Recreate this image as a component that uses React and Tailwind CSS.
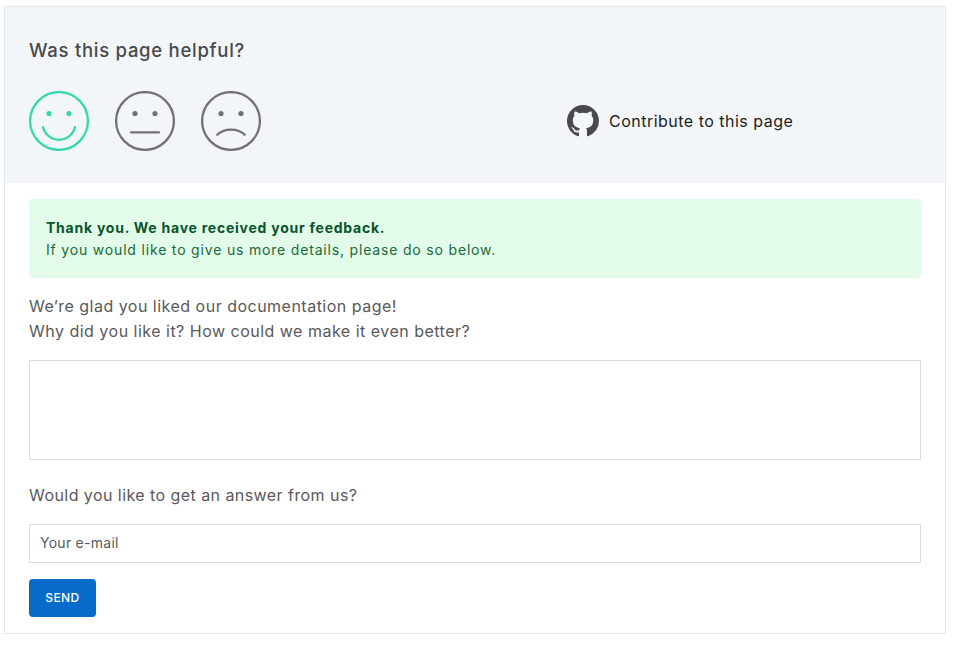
const faces = [
  { name: "Happy", color: "text-[#35d8ae]", mouth: "M14 36A16.4 16.4 0 0 0 46 36" },
  { name: "Neutral", color: "text-[#707276]", mouth: "M16 41.3H44" },
  { name: "Sad", color: "text-[#707276]", mouth: "M16.2 43.8C23 36.8 37 36.8 43.8 43.8" },
];

function Face({ name, color, mouth }) {
  return (
    <button aria-label={name} className={`size-[60px] ${color}`}>
      <svg viewBox="0 0 60 60" fill="none" stroke="currentColor" strokeWidth="2.3" strokeLinecap="round" className="size-full">
        <circle cx="30" cy="30" r="28.9" />
        <circle cx="20" cy="22.5" r="2.6" fill="currentColor" stroke="none" />
        <circle cx="40" cy="22.5" r="2.6" fill="currentColor" stroke="none" />
        <path d={mouth} />
      </svg>
    </button>
  );
}

function GithubMark() {
  return (
    <svg viewBox="0 0 16 16" fill="currentColor" className="size-8 text-[#48494b]">
      <path d="M8 0C3.58 0 0 3.58 0 8c0 3.54 2.29 6.53 5.47 7.59.4.07.55-.17.55-.38 0-.19-.01-.82-.01-1.49-2.01.37-2.53-.49-2.69-.94-.09-.23-.48-.94-.82-1.13-.28-.15-.68-.52-.01-.53.63-.01 1.08.58 1.23.82.72 1.21 1.87.87 2.33.66.07-.52.28-.87.51-1.07-1.78-.2-3.64-.89-3.64-3.95 0-.87.31-1.59.82-2.15-.08-.2-.36-1.02.08-2.12 0 0 .67-.21 2.2.82.64-.18 1.32-.27 2-.27s1.36.09 2 .27c1.53-1.04 2.2-.82 2.2-.82.44 1.1.16 1.92.08 2.12.51.56.82 1.27.82 2.15 0 3.07-1.87 3.75-3.65 3.95.29.25.54.73.54 1.48 0 1.07-.01 1.93-.01 2.2 0 .21.15.46.55.38A8.01 8.01 0 0 0 16 8c0-4.42-3.58-8-8-8Z" />
    </svg>
  );
}

export default function App() {
  return (
    <div className="h-[648px] bg-white pt-1.5 pl-1 font-[Inter,sans-serif] text-[#58595b]">
      <section className="h-[628px] w-[942px] border border-[#e6e7e8]">
        <header className="h-[176px] bg-[#f3f6f9] px-6 pt-[31px]">
          <h2 className="whitespace-nowrap text-[18.5px] leading-6 font-medium tracking-[0.73px] text-[#48494b]">Was this page helpful?</h2>
          <div className="mt-[29px] flex items-center">
            <div className="flex w-[538px] gap-[26px]">
              {faces.map((face) => <Face key={face.name} {...face} />)}
            </div>
            <a className="flex items-center gap-2.5 whitespace-nowrap text-base leading-6 tracking-[0.49px] text-[#1c1d20]">
              <GithubMark />
              <span>Contribute to this page</span>
            </a>
          </div>
        </header>
        <div className="px-6 pt-4">
          <div className="h-[79px] rounded bg-[#e3fbe9] pt-[18px] pl-[17px] text-sm leading-[22px] whitespace-nowrap text-[#1b6a3b]">
            <p className="font-bold tracking-[0.76px] text-[#07552a]">Thank you. We have received your feedback.</p>
            <p className="tracking-[0.82px]">If you would like to give us more details, please do so below.</p>
          </div>
          <div className="mt-4 text-base leading-[25px] whitespace-nowrap">
            <p className="tracking-[0.49px]">We’re glad you liked our documentation page!</p>
            <p className="tracking-[0.49px]">Why did you like it? How could we make it even better?</p>
          </div>
          <textarea aria-label="Feedback" className="mt-4 block h-[100px] w-full resize-none border border-[#dcdddf] bg-white" />
          <p className="mt-[23px] text-base leading-[25px] tracking-[0.44px] whitespace-nowrap">Would you like to get an answer from us?</p>
          <input type="email" placeholder="Your e-mail" className="mt-4 block h-[39px] w-full border border-[#dcdddf] bg-white px-2.5 pb-0.5 text-sm tracking-[0.26px] placeholder:text-[#58595b]" />
          <button className="mt-4 flex h-[38px] w-[67px] items-center justify-center rounded bg-[#066bc9] text-xs font-medium tracking-[0.4px] text-white">SEND</button>
        </div>
      </section>
    </div>
  );
}
